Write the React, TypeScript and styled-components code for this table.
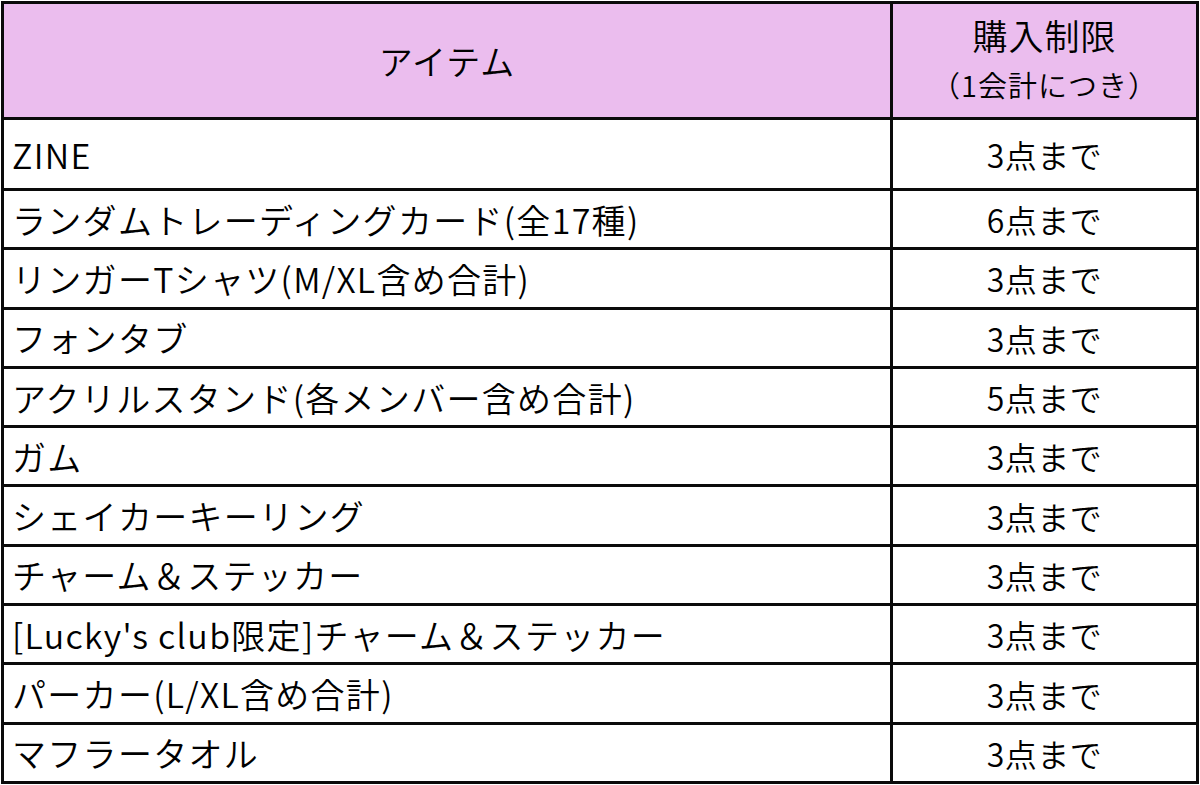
import { FC, Fragment } from "react";
import { createGlobalStyle, styled } from "styled-components";

const GlobalStyle = createGlobalStyle`
  html, body {
    margin: 0;
    padding: 0;
    background: #ffffff;
  }

  body {
    font-family: "Noto Sans CJK JP", "Noto Sans", sans-serif;
    color: #000000;
  }
`;

const Page = styled.div`
  padding: 1px;
  width: 1198px;
`;

const Table = styled.div`
  display: grid;
  grid-template-columns: 886px 303px;
  grid-template-rows: 113px 68px repeat(10, 56.3px);
  gap: 3px;
  padding: 3px;
  background: #0a0a0a;
`;

const HeadCell = styled.div`
  background: #ebbdee;
  display: flex;
  flex-direction: column;
  align-items: center;
  justify-content: center;
  font-size: 34px;
  font-weight: 350;
  letter-spacing: 1px;
  line-height: 1;
`;

const HeadTitle = styled.span`
  font-size: 35px;
  margin-top: -6px;
`;

const HeadSub = styled.span`
  font-size: 29px;
  letter-spacing: 1px;
  margin-top: 18px;
`;

const Cell = styled.div<{ $center?: boolean }>`
  background: #ffffff;
  display: flex;
  align-items: center;
  justify-content: ${(p) => (p.$center ? "center" : "flex-start")};
  padding-left: ${(p) => (p.$center ? "0" : "8px")};
  font-size: ${(p) => (p.$center ? "32px" : "34px")};
  letter-spacing: ${(p) => (p.$center ? "0.5px" : "1.3px")};
  font-weight: 350;
  white-space: nowrap;
`;

const rows: [string, string][] = [
  ["ZINE", "3点まで"],
  ["ランダムトレーディングカード(全17種)", "6点まで"],
  ["リンガーTシャツ(M/XL含め合計)", "3点まで"],
  ["フォンタブ", "3点まで"],
  ["アクリルスタンド(各メンバー含め合計)", "5点まで"],
  ["ガム", "3点まで"],
  ["シェイカーキーリング", "3点まで"],
  ["チャーム＆ステッカー", "3点まで"],
  ["[Lucky's club限定]チャーム＆ステッカー", "3点まで"],
  ["パーカー(L/XL含め合計)", "3点まで"],
  ["マフラータオル", "3点まで"],
];

const App: FC = () => {
  return (
    <Page>
      <GlobalStyle />
      <Table>
        <HeadCell>アイテム</HeadCell>
        <HeadCell>
          <HeadTitle>購入制限</HeadTitle>
          <HeadSub>（1会計につき）</HeadSub>
        </HeadCell>
        {rows.map(([item, limit]) => (
          <Fragment key={item}>
            <Cell>{item}</Cell>
            <Cell $center>{limit}</Cell>
          </Fragment>
        ))}
      </Table>
    </Page>
  );
};

export default App;
